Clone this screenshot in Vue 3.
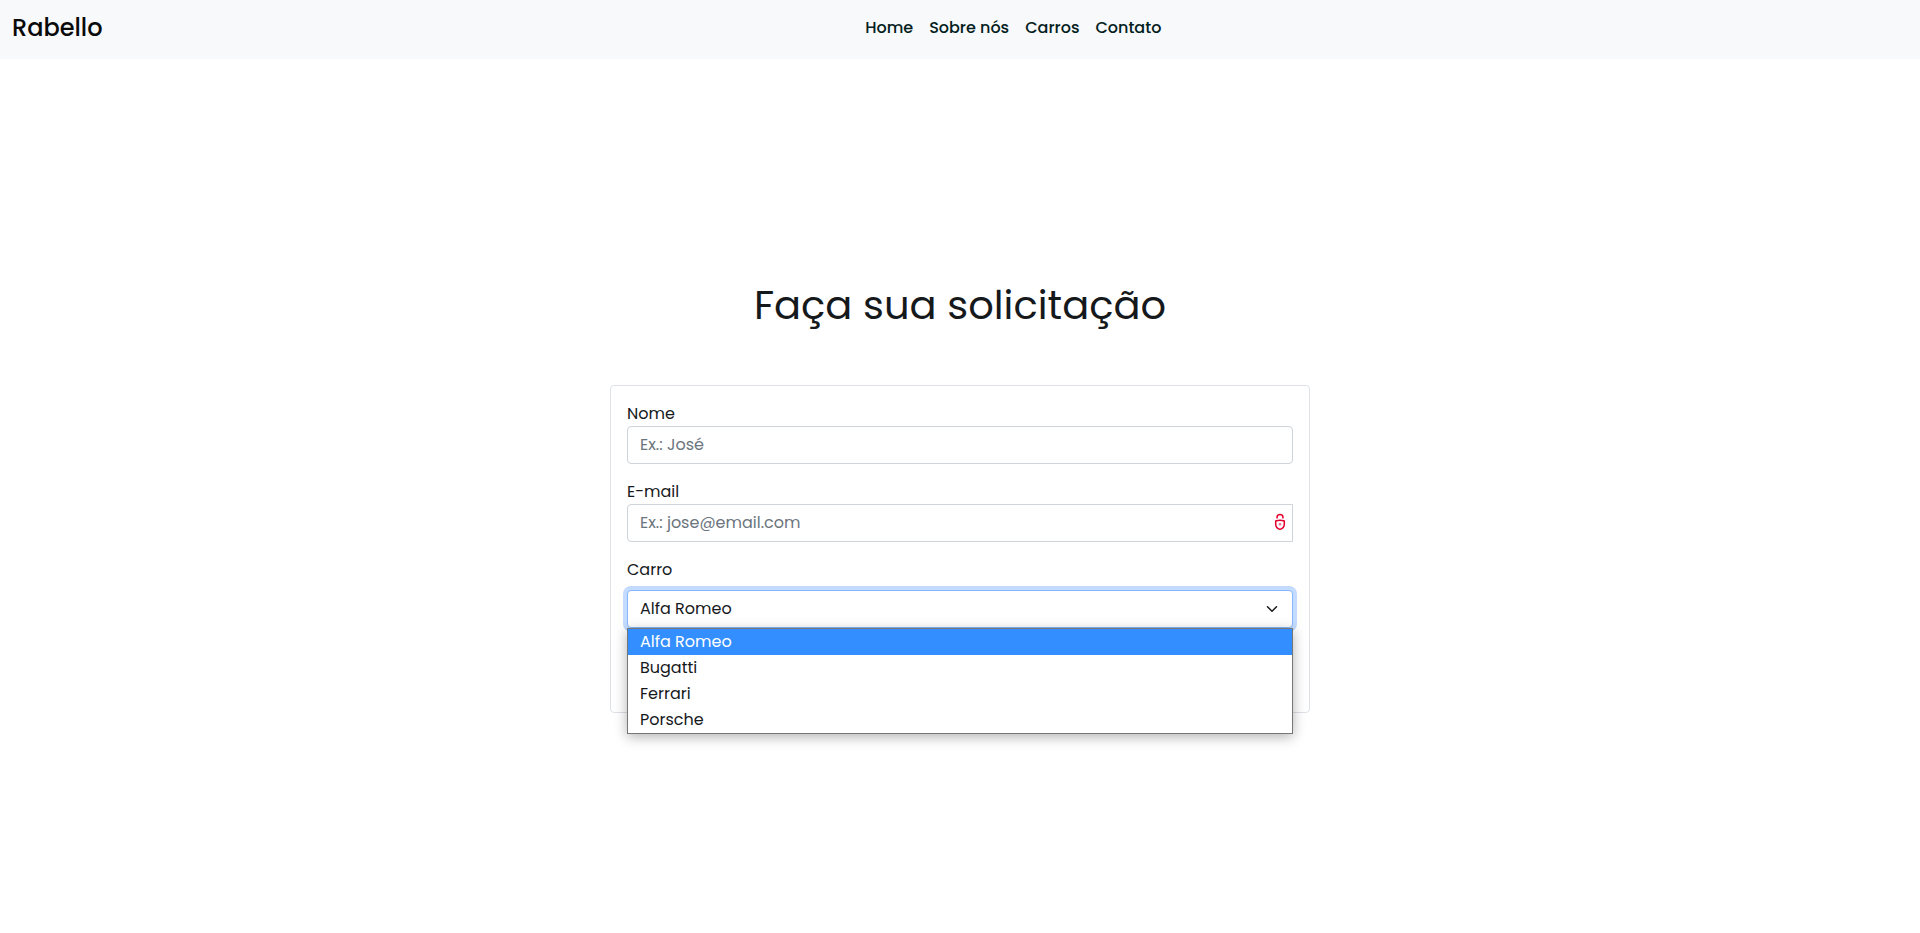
<script setup>
import { ref } from 'vue'

const links = ['Home', 'Sobre nós', 'Carros', 'Contato']
const cars = ['Alfa Romeo', 'Bugatti', 'Ferrari', 'Porsche']
const name = ref('')
const email = ref('')
const car = ref(cars[0])
</script>

<template>
  <div class="page">
    <header class="navbar">
      <a class="brand" href="#">Rabello</a>
      <nav class="links">
        <a v-for="link in links" :key="link" class="link" href="#">{{ link }}</a>
      </nav>
    </header>

    <main class="main">
      <h1 class="title">Faça sua solicitação</h1>

      <form class="card" @submit.prevent>
        <div class="field">
          <label for="name">Nome</label>
          <input id="name" v-model="name" class="control control-text" type="text" placeholder="Ex.: José" />
        </div>

        <div class="field">
          <label for="email">E-mail</label>
          <div class="anchor">
            <input
              id="email"
              v-model="email"
              class="control control-text control-email"
              type="email"
              placeholder="Ex.: jose@email.com"
            />
            <svg class="lock" viewBox="0 0 12 18" aria-hidden="true">
              <path d="M3 5.600V4.400a3 3 0 0 1 6 0v1.200" />
              <path d="M1.700 8Q6 6.600 10.300 8V11.200c0 2.600-1.900 4.500-4.300 5.200C3.600 15.700 1.700 13.800 1.700 11.200Z" />
              <circle cx="6" cy="11.300" r="1.300" />
            </svg>
          </div>
        </div>

        <div class="field field-car">
          <label for="car">Carro</label>
          <div class="anchor">
            <select id="car" v-model="car" class="control control-select">
              <option v-for="item in cars" :key="item">{{ item }}</option>
            </select>
            <svg class="chevron" viewBox="0 0 16 16" aria-hidden="true">
              <path d="M2 5l6 6 6-6" />
            </svg>
            <ul class="menu" role="listbox" aria-label="Carro">
              <li
                v-for="item in cars"
                :key="item"
                class="option"
                :class="{ active: item === car }"
                role="option"
                :aria-selected="item === car"
                @click="car = item"
              >
                {{ item }}
              </li>
            </ul>
          </div>
        </div>
      </form>
    </main>
  </div>
</template>

<style>
body {
  margin: 0;
  background: #fff;
}
</style>

<style scoped>
.page,
.page * {
  box-sizing: border-box;
}

.page {
  display: flex;
  flex-direction: column;
  min-height: 100vh;
  color: #16191c;
  font-family: Poppins, Inter, "Open Sans", sans-serif;
  font-size: 16px;
  line-height: 24px;
}

.navbar {
  display: flex;
  align-items: center;
  gap: 16px;
  min-height: 59px;
  padding: 0 12px 4px;
  background: #f8f9fb;
}

.brand {
  color: #0a0a0a;
  font-size: 24px;
  font-weight: 500;
  line-height: 36px;
  text-decoration: none;
}

.links {
  display: flex;
  flex: 1;
  justify-content: center;
}

.link {
  padding: 8px;
  color: #022020;
  font-weight: 500;
  text-decoration: none;
}

.main {
  display: flex;
  flex: 1;
  flex-direction: column;
  align-items: center;
  justify-content: center;
}

.title {
  margin: 0 0 54px;
  font-size: 40px;
  font-weight: 400;
  line-height: 52px;
}

.card {
  display: flex;
  flex-direction: column;
  gap: 16px;
  width: 100%;
  max-width: 700px;
  padding: 16px 16px 84px;
  border: 1px solid #dee2e6;
  border-radius: 4px;
}

.field {
  display: flex;
  flex-direction: column;
}

.field-car {
  gap: 8px;
}

.anchor {
  position: relative;
}

.control {
  display: block;
  width: 100%;
  height: 38px;
  padding: 6px 12px;
  border: 1px solid #ced4da;
  border-radius: 4px;
  outline: 0;
  background: #fff;
  color: #16191c;
  font: inherit;
  appearance: none;
}

.control::placeholder {
  color: #6c757d;
  opacity: 1;
}

.control-text {
  padding: 5px 12px 7px;
}

.control-email {
  padding-right: 32px;
  border-radius: 4px 0 0 4px;
}

.control-select {
  border-color: #86b7fe;
  box-shadow: 0 0 0 4px #c2dbfe;
}

.lock {
  position: absolute;
  top: 9px;
  right: 7px;
  width: 12px;
  height: 18px;
  fill: none;
  stroke: #e4002b;
  stroke-width: 1.5;
}

.lock circle {
  fill: #f0708a;
  stroke: none;
}

.chevron {
  position: absolute;
  top: 13px;
  right: 15px;
  width: 12px;
  height: 12px;
  fill: none;
  stroke: #16191c;
  stroke-width: 2;
  stroke-linecap: round;
  stroke-linejoin: round;
}

.menu {
  position: absolute;
  top: 100%;
  right: 0;
  left: 0;
  margin: 0;
  padding: 0;
  border: 1px solid #767676;
  background: #fff;
  box-shadow: 0 3px 12px rgba(0, 0, 0, 0.3);
  list-style: none;
}

.option {
  padding: 1px 12px;
  cursor: default;
}

.option.active {
  background: #338fff;
  color: #fff;
}
</style>
